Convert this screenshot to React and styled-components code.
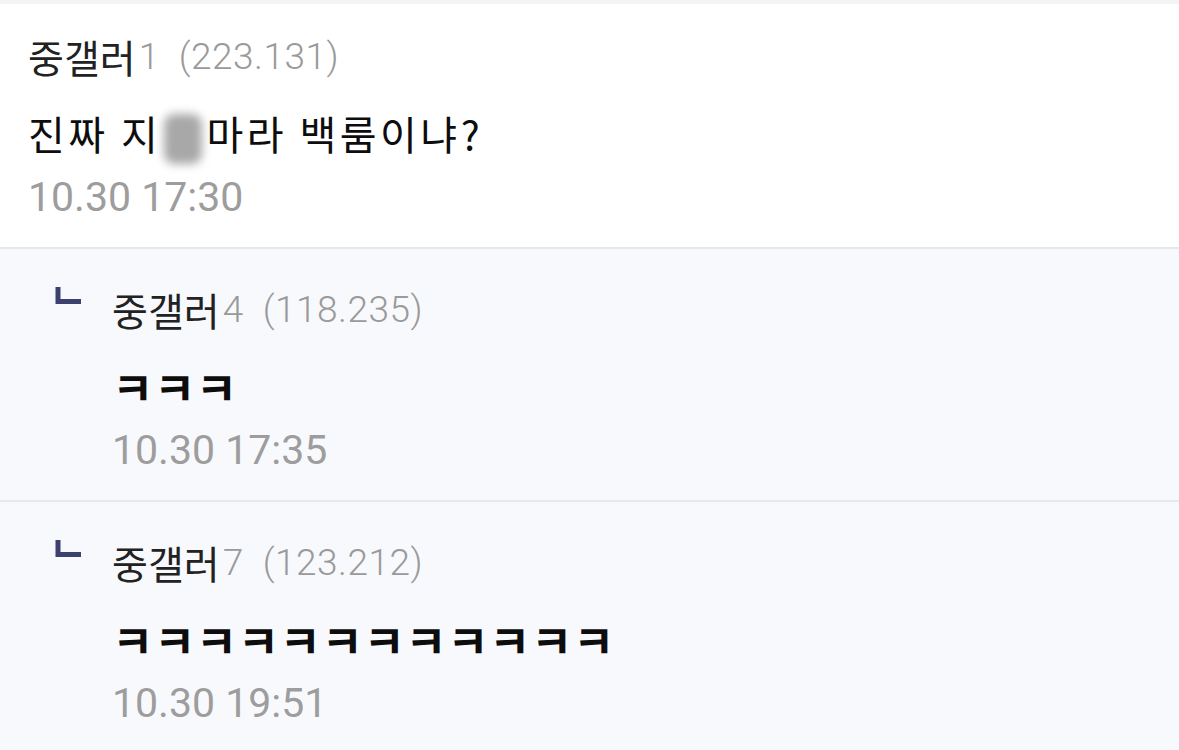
import React from 'react';
import styled, { createGlobalStyle } from 'styled-components';

const GlobalStyle = createGlobalStyle`
  html, body {
    margin: 0;
    padding: 0;
    background: #ffffff;
  }
  body {
    font-family: Roboto, "Noto Sans CJK KR", sans-serif;
  }
`;

const List = styled.div`
  width: 1179px;
  height: 750px;
  overflow: hidden;
  border-top: 4px solid #f3f4f6;
  box-sizing: border-box;
`;

const Comment = styled.div`
  display: flex;
  align-items: flex-start;
  gap: 31px;
  padding: ${p => (p.$reply ? '30px 28px 20px 55px' : '22px 28px 20px 28px')};
  background: ${p => (p.$reply ? '#f8f9fc' : '#ffffff')};
  border-bottom: 2px solid #e6e8ee;
`;

const ReplyMark = styled.svg`
  flex: none;
  width: 26px;
  height: 17px;
  margin-top: 8px;
`;

const Body = styled.div`
  display: flex;
  flex-direction: column;
`;

const NameLine = styled.div`
  height: 60px;
  display: flex;
  align-items: center;
  font-size: 39px;
  color: #222;
  white-space: nowrap;
`;

const Nick = styled.span`
  font-family: "Noto Sans CJK KR", sans-serif;
`;

const Ip = styled.span`
  color: #9a9a9a;
  font-weight: 300;
  font-size: 37px;
  letter-spacing: 0.5px;
  padding-left: 3px;
`;

const Text = styled.div`
  height: 60px;
  margin-top: 17px;
  display: flex;
  align-items: center;
  font-family: "Noto Sans CJK KR", sans-serif;
  font-size: ${p => (p.$laugh ? '45px' : '40px')};
  font-weight: ${p => (p.$laugh ? 700 : 400)};
  letter-spacing: ${p => (p.$laugh ? '0.5px' : '3.5px')};
  color: #0d0d0d;
  white-space: pre;
`;

const Blur = styled.span`
  display: inline-block;
  width: 38px;
  height: 50px;
  margin: 0 4px 0 3px;
  background: #a8a8a8;
  border-radius: 10px;
  filter: blur(5px);
  transform: translateY(6px);
`;

const Date = styled.div`
  height: 60px;
  margin-top: 4px;
  display: flex;
  align-items: center;
  font-size: 41px;
  color: #9d9d9d;
`;

const replies = [
  { nick: '중갤러', num: '4', ip: '(118.235)', text: 'ㅋㅋㅋ', date: '10.30 17:35' },
  { nick: '중갤러', num: '7', ip: '(123.212)', text: 'ㅋㅋㅋㅋㅋㅋㅋㅋㅋㅋㅋㅋ', date: '10.30 19:51' }
];

export default function App() {
  return (
    <>
      <GlobalStyle />
      <List>
        <Comment>
          <Body>
            <NameLine>
              <Nick>중갤러</Nick>
              <Ip>1&nbsp;&nbsp;(223.131)</Ip>
            </NameLine>
            <Text>
              진짜 지<Blur />마라 백룸이냐?
            </Text>
            <Date>10.30 17:30</Date>
          </Body>
        </Comment>
        {replies.map((r, idx) => (
          <Comment $reply key={idx}>
            <ReplyMark viewBox="0 0 26 17">
              <path d="M3 0 V14.5 H26" fill="none" stroke="#3d416e" strokeWidth="5" />
            </ReplyMark>
            <Body>
              <NameLine>
                <Nick>{r.nick}</Nick>
                <Ip>{r.num}&nbsp;&nbsp;{r.ip}</Ip>
              </NameLine>
              <Text $laugh>{r.text}</Text>
              <Date>{r.date}</Date>
            </Body>
          </Comment>
        ))}
      </List>
    </>
  );
}
